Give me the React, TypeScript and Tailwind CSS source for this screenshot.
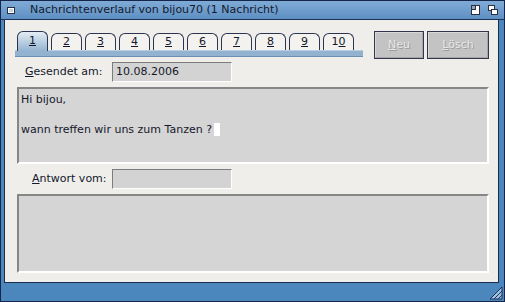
import React from 'react';

const font = { fontFamily: '"DejaVu Sans", Verdana, sans-serif' };

function Tab({ label, active }: { label: string; active?: boolean }) {
  // underline the first digit, like the keyboard shortcut hint
  const first = label === '10' ? '0' : label[0];
  const rest = label === '10' ? '' : label.slice(1);
  return (
    <div
      className={
        active
          ? 'w-[31px] h-[20px] -mb-px rounded-t-[6px] border border-b-0 border-[#2c3450] bg-gradient-to-b from-[#e4ecf3] to-[#93b3d1] flex items-center justify-center text-[11px] text-[#14182a] relative z-10'
          : 'w-[31px] h-[17px] rounded-t-[6px] border border-b-0 border-[#2c3450] bg-[#f3f2ef] flex items-center justify-center text-[11px] text-[#14182a]'
      }
    >
      {label === '10' ? (
        <span>
          1<span className="underline">0</span>
        </span>
      ) : (
        <span>
          <span className="underline">{first}</span>
          {rest}
        </span>
      )}
    </div>
  );
}

function Button({ hot, rest, w }: { hot: string; rest: string; w: string }) {
  return (
    <div className={`${w} h-[28px] border border-[#34364e] bg-[#c3c3c3] flex items-center justify-center`}>
      <div className="w-full h-full border border-t-[#d8d8d8] border-l-[#d8d8d8] border-b-[#a6a6a6] border-r-[#a6a6a6] flex items-center justify-center text-[11px] text-[#e6e6e6] [text-shadow:1px_1px_0_#9c9c9c]">
        <span>
          <span className="underline">{hot}</span>
          {rest}
        </span>
      </div>
    </div>
  );
}

function Field({ value }: { value?: string }) {
  return (
    <div className="w-[120px] h-[20px] border border-t-[#7c7c7c] border-l-[#7c7c7c] border-b-white border-r-white bg-[#d3d3d3] flex items-center px-[3px] text-[11px] text-[#14182a]">
      {value}
    </div>
  );
}

export default function App() {
  const tabs = ['1', '2', '3', '4', '5', '6', '7', '8', '9', '10'];
  return (
    <div style={font} className="w-[505px] h-[302px] bg-[#4b87bd] border border-[#16264a] flex flex-col overflow-hidden">
      {/* Title bar */}
      <div className="h-[19px] border-b border-[#1f3358] bg-gradient-to-b from-[#80abd6] to-[#5e90c3] flex items-center pl-[6px] pr-[6px]">
        <div className="w-[8px] h-[7px] border border-[#2a3040] bg-white flex items-center justify-center">
          <div className="w-[4px] h-[3px] bg-[#c8d4e0]" />
        </div>
        <span className="ml-[15px] text-[11px] text-[#141a2c]">Nachrichtenverlauf von bijou70 (1 Nachricht)</span>
        <div className="ml-auto flex items-center gap-[8px]">
          <div className="w-[9px] h-[10px] border border-[#2a3040] bg-white relative">
            <div className="absolute left-0 top-0 w-[4px] h-[4px] bg-[#8aa6c4] border-r border-b border-[#2a3040]" />
          </div>
          <div className="w-[10px] h-[10px] relative">
            <div className="absolute left-0 top-0 w-[7px] h-[6px] border border-[#2a3040] bg-white" />
            <div className="absolute right-0 bottom-0 w-[7px] h-[6px] border border-[#2a3040] bg-white" />
          </div>
        </div>
      </div>

      {/* Body */}
      <div className="flex-1 flex pl-[3px] pr-[5px]">
        <div className="flex-1 border-l border-r border-b border-[#1c2c4c] bg-[#efeeeb] flex flex-col pl-[12px] pr-[9px]">
          <div className="flex items-start mt-[11px]">
            <div className="flex flex-col -ml-[2px]">
              <div className="flex items-end gap-[3px] pl-[2px] h-[19px]">
                {tabs.map((t, i) => (
                  <Tab key={t} label={t} active={i === 0} />
                ))}
              </div>
              <div className="w-[348px] h-[7px] bg-[#93b2d0] border-t border-[#b9cfe3] border-b border-b-[#6d8fb3]" />
            </div>
            <div className="flex gap-[3px] ml-[11px]">
              <Button hot="N" rest="eu" w="w-[50px]" />
              <Button hot="L" rest="ösch" w="w-[62px]" />
            </div>
          </div>

          <div className="flex items-center mt-[3px] h-[20px]">
            <span className="w-[95px] pl-[8px] text-[11px] text-[#14182a]">
              <span className="underline">G</span>esendet am:
            </span>
            <Field value="10.08.2006" />
          </div>

          <div className="mt-[5px] h-[77px] border-2 border-t-[#868686] border-l-[#868686] border-b-white border-r-white bg-[#d5d5d5] px-[2px] pt-[3px] text-[11px] leading-[15px] text-[#14182a]">
            <div>Hi bijou,</div>
            <div>&nbsp;</div>
            <div className="flex items-center">
              wann treffen wir uns zum Tanzen ?
              <span className="inline-block w-[6px] h-[13px] bg-white ml-[2px]" />
            </div>
          </div>

          <div className="flex items-center mt-[5px] h-[20px]">
            <span className="w-[95px] pl-[15px] text-[11px] text-[#14182a]">
              <span className="underline">A</span>ntwort vom:
            </span>
            <Field />
          </div>

          <div className="mt-[5px] h-[79px] border-2 border-t-[#868686] border-l-[#868686] border-b-white border-r-white bg-[#d5d5d5]" />
        </div>
      </div>

      {/* Bottom bar */}
      <div className="h-[18px] flex items-end justify-end pr-[1px] pb-[1px]">
        <svg width="14" height="14" viewBox="0 0 14 14">
          <path d="M13 1 L1 13 L13 13 Z" fill="#9cc0e0" stroke="#1f3358" strokeWidth="1" />
          <path d="M13 5 L5 13 M13 9 L9 13" stroke="#1f3358" strokeWidth="1" />
        </svg>
      </div>
    </div>
  );
}
